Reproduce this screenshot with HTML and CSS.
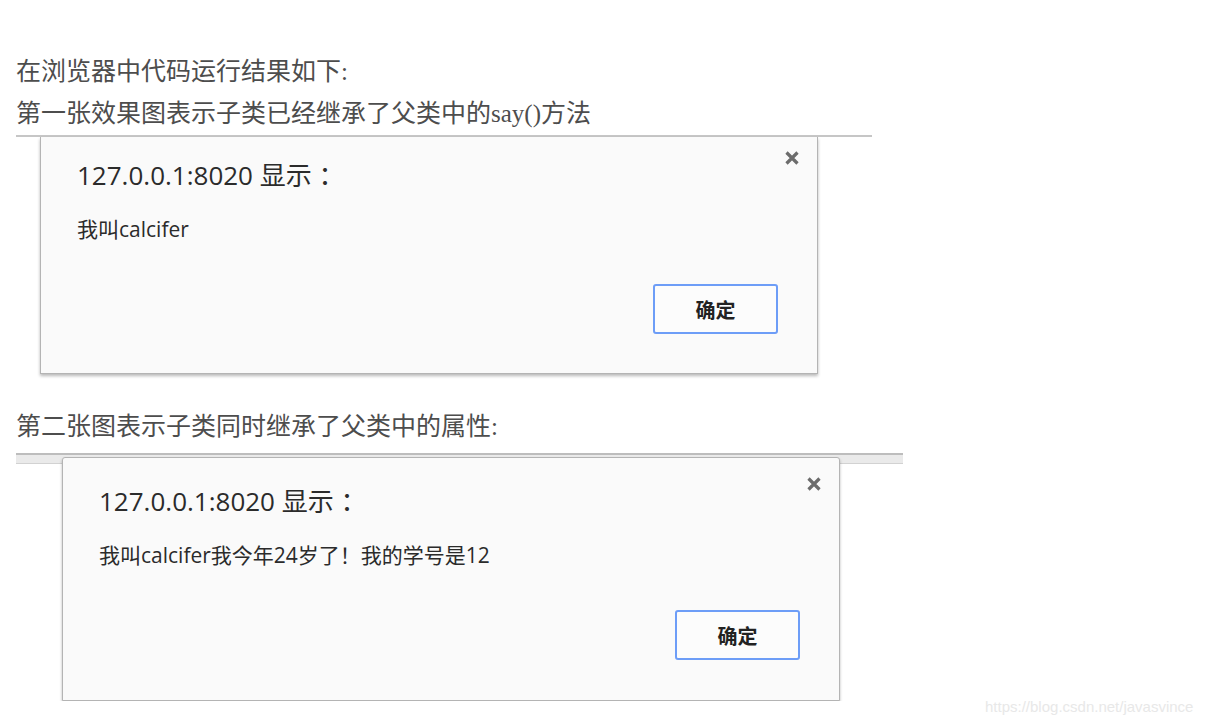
FILE: index.html
```html
<!DOCTYPE html>
<html lang="zh-CN">
<head>
    <meta charset="UTF-8">
    <title>继承运行结果</title>
    <link rel="stylesheet" href="styles.css">
</head>
<body>
    <div class="article">
        <p class="line">在浏览器中代码运行结果如下:</p>
        <p class="line">第一张效果图表示子类已经继承了父类中的say()方法</p>

        <div class="shot shot-first">
            <div class="dialog">
                <svg class="close" width="14" height="14" viewBox="0 0 14 14">
                    <path d="M1.5 1.5 L12.5 12.5 M12.5 1.5 L1.5 12.5" stroke="#6c6c6c" stroke-width="3.2"/>
                </svg>
                <div class="dialog-title">127.0.0.1:8020 显示 ：</div>
                <div class="dialog-msg">我叫calcifer</div>
                <div class="dialog-actions">
                    <button class="ok">确定</button>
                </div>
            </div>
        </div>

        <p class="line line-gap">第二张图表示子类同时继承了父类中的属性:</p>

        <div class="shot shot-second">
            <div class="dialog dialog-full">
                <svg class="close" width="14" height="14" viewBox="0 0 14 14">
                    <path d="M1.5 1.5 L12.5 12.5 M12.5 1.5 L1.5 12.5" stroke="#6c6c6c" stroke-width="3.2"/>
                </svg>
                <div class="dialog-title">127.0.0.1:8020 显示 ：</div>
                <div class="dialog-msg">我叫calcifer我今年24岁了！我的学号是12</div>
                <div class="dialog-actions">
                    <button class="ok">确定</button>
                </div>
            </div>
        </div>
    </div>

    <div class="watermark">https://blog.csdn.net/javasvince</div>
</body>
</html>
```

FILE: styles.css
```css
body {
    margin: 0;
    background-color: #fff;
    font-family: "Liberation Serif", "Noto Sans CJK SC", serif;
    color: #4d4d4d;
}
.article {
    padding: 51px 0 0 16px;
}
.line {
    margin: 0;
    font-size: 25px;
    line-height: 42px;
}
.line-gap {
    margin-top: 32px;
}
.shot {
    position: relative;
}
.shot-first {
    width: 856px;
    border-top: 2px solid #c6c6c6;
}
.shot-second {
    width: 887px;
    margin-top: 5px;
    padding-top: 2px;
    border-top: 2px solid #bdbdbd;
    background: linear-gradient(#eaeaea, #eaeaea) top left / 100% 8px no-repeat;
}
.shot-second::after {
    content: "";
    position: absolute;
    left: 0;
    right: 0;
    top: 8px;
    height: 1px;
    background-color: #d2d2d2;
}
.dialog {
    position: relative;
    z-index: 1;
    box-sizing: border-box;
    width: 778px;
    margin-left: 24px;
    padding: 20px 39px 39px 36px;
    background-color: #fafafa;
    border: 1px solid #b4b4b4;
    border-top: none;
    box-shadow: 0 2px 3px rgba(0, 0, 0, 0.28);
    font-family: "Open Sans", "Noto Sans CJK SC", sans-serif;
    color: #333;
}
.dialog-full {
    margin-left: 46px;
    padding-top: 25px;
    padding-bottom: 40px;
    border-top: 1px solid #b4b4b4;
    border-radius: 3px 3px 0 0;
}
.close {
    position: absolute;
    top: 14px;
    right: 18px;
}
.dialog-full .close {
    top: 19px;
}
.dialog-title {
    font-size: 26px;
    line-height: 36px;
    color: #2b2b2b;
}
.dialog-msg {
    margin-top: 21px;
    font-size: 21px;
    line-height: 30px;
    color: #2b2b2b;
}
.dialog-actions {
    display: flex;
    justify-content: flex-end;
    margin-top: 40px;
}
.ok {
    width: 125px;
    height: 50px;
    background-color: #fcfcfc;
    border: 2px solid #6d9df7;
    border-radius: 3px;
    font-family: "Noto Sans CJK SC", sans-serif;
    font-size: 20px;
    font-weight: bold;
    color: #222;
}
.watermark {
    position: absolute;
    left: 985px;
    top: 698px;
    font-family: "Liberation Sans", sans-serif;
    font-size: 15px;
    color: #e8e8e8;
}
```
